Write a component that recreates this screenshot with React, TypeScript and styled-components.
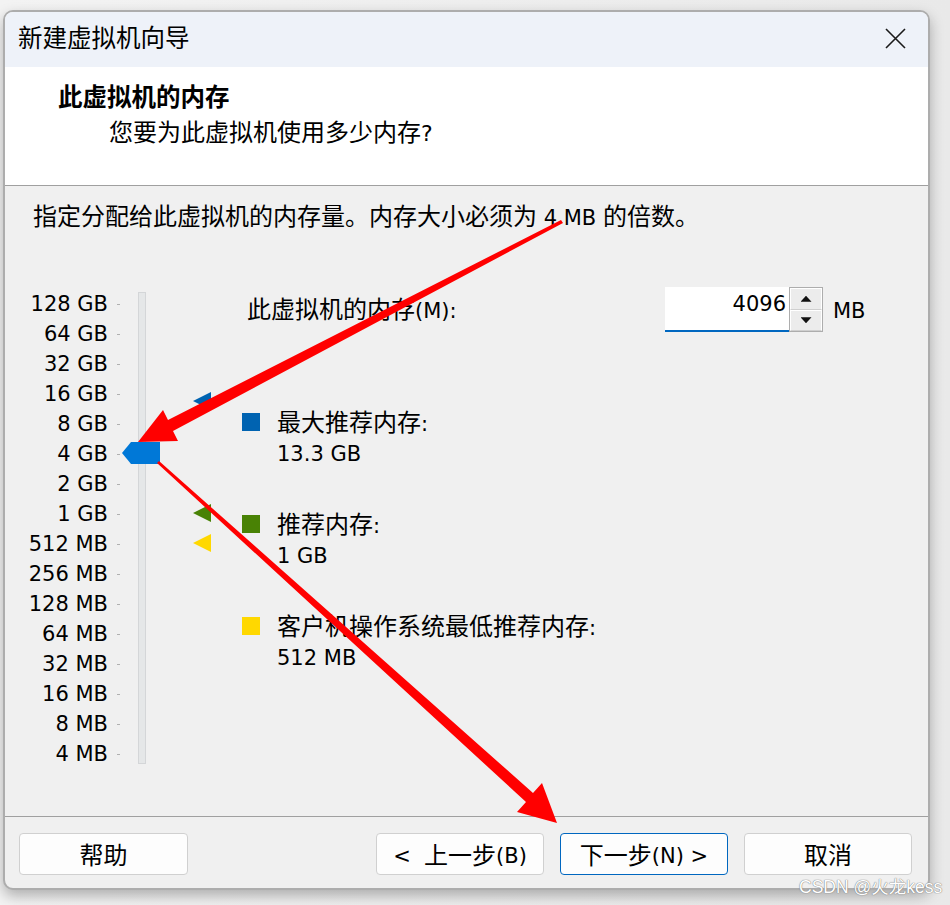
import React from 'react';
import styled, { createGlobalStyle } from 'styled-components';

const GlobalStyle = createGlobalStyle`
  html, body { margin: 0; padding: 0; background: #ededed; }
  body {
    font-family: "DejaVu Sans", "Noto Sans CJK SC", sans-serif;
    color: #000;
    width: 950px;
    height: 905px;
    overflow: hidden;
  }
  * { box-sizing: border-box; }
`;

const Page = styled.div`
  position: relative;
  width: 950px;
  height: 905px;
  padding: 10px 0 0 3px;
  background: linear-gradient(to right, #f3f3f3, #e9e9e9);
`;

const Dialog = styled.div`
  width: 927px;
  height: 880px;
  border: 2px solid #adadad;
  border-radius: 10px;
  background: #f0f0f0;
  overflow: hidden;
  display: flex;
  flex-direction: column;
  box-shadow: 0 6px 14px rgba(0, 0, 0, 0.28);
`;

const TitleBar = styled.div`
  flex: none;
  height: 55px;
  background: #eef2f9;
  display: flex;
  align-items: center;
  justify-content: space-between;
  padding: 0 22px 0 13px;
`;

const TitleText = styled.div`
  font-size: 24.5px;
  line-height: 30px;
  margin-top: -2px;
`;

const CloseButton = styled.div`
  width: 22px;
  height: 22px;
  display: flex;
  align-items: center;
  justify-content: center;
  margin-top: -3px;
`;

const Header = styled.div`
  flex: none;
  height: 119px;
  background: #fff;
  border-bottom: 1px solid #a0a0a0;
  padding: 15px 0 0 53px;
`;

const Heading = styled.div`
  font-size: 24.5px;
  font-weight: bold;
  line-height: 32px;
`;

const SubHeading = styled.div`
  font-size: 22px;
  line-height: 32px;
  margin-top: 3px;
  padding-left: 51px;
`;

const Body = styled.div`
  flex: 1;
  border-bottom: 1px solid #a0a0a0;
  display: flex;
  flex-direction: column;
`;

const Description = styled.div`
  font-size: 21px;
  line-height: 30px;
  padding: 16px 0 0 28px;
`;

const MainRow = styled.div`
  position: relative;
  display: flex;
  margin-top: 56px;
`;

const Scale = styled.div`
  display: flex;
  flex-direction: column;
`;

const ScaleRow = styled.div`
  height: 30px;
  display: flex;
  align-items: center;
`;

const ScaleLabel = styled.div`
  width: 103px;
  text-align: right;
  font-size: 21px;
  line-height: 30px;
`;

const Tick = styled.div`
  width: 3px;
  height: 1px;
  margin-left: 9px;
  background: #b0b0b0;
`;

const Track = styled.div`
  width: 8px;
  height: 472px;
  margin: 3px 0 0 18px;
  background: #e5e7e8;
  border: 1px solid #d4d6d8;
`;

const Thumb = styled.div`
  position: absolute;
  left: 117px;
  width: 38px;
  height: 22px;
  background: #0078d7;
  clip-path: polygon(0 50%, 9px 0, 100% 0, 100% 100%, 9px 100%);
`;

const Marker = styled.div<{ $color: string }>`
  position: absolute;
  left: 188px;
  width: 18px;
  height: 18px;
  background: ${(p) => p.$color};
  clip-path: polygon(0 50%, 100% 0, 100% 100%);
`;

const RightPanel = styled.div`
  display: flex;
  flex-direction: column;
`;

const MemoryRow = styled.div`
  display: flex;
  align-items: center;
  height: 45px;
  margin-top: -2px;
  padding-left: 101px;
`;

const MemoryLabel = styled.div`
  width: 418px;
  font-size: 21px;
  line-height: 30px;
  margin-top: 1px;
`;

const SpinInput = styled.div`
  width: 124px;
  height: 45px;
  background: #fff;
  border-bottom: 2px solid #0067c0;
  text-align: right;
  padding-right: 3px;
  font-size: 21px;
  line-height: 34px;
`;

const SpinButtons = styled.div`
  width: 34px;
  height: 45px;
  border: 1px solid #adadad;
  display: flex;
  flex-direction: column;
`;

const SpinButton = styled.div`
  flex: 1;
  background: #ececec;
  border: 1px solid #fff;
  border-bottom-color: #cfcfcf;
  display: flex;
  align-items: center;
  justify-content: center;
`;

const Caret = styled.div<{ $up?: boolean }>`
  width: 11px;
  height: 6px;
  background: #111;
  clip-path: ${(p) =>
    p.$up ? 'polygon(50% 0, 100% 100%, 0 100%)' : 'polygon(0 0, 100% 0, 50% 100%)'};
`;

const Unit = styled.div`
  margin-left: 10px;
  font-size: 21px;
  line-height: 30px;
  margin-top: 2px;
`;

const Legend = styled.div`
  display: flex;
  flex-direction: column;
  gap: 41px;
  margin-top: 76px;
`;

const LegendItem = styled.div`
  display: flex;
  align-items: flex-start;
  padding-left: 96px;
`;

const Swatch = styled.div<{ $color: string }>`
  width: 18px;
  height: 18px;
  margin-top: 5px;
  flex: none;
  background: ${(p) => p.$color};
`;

const LegendText = styled.div`
  margin-left: 17px;
  font-size: 21px;
  line-height: 30px;
`;

const Footer = styled.div`
  flex: none;
  height: 71px;
  display: flex;
  align-items: flex-start;
  gap: 16px;
  padding: 16px 16px 0 14px;
`;

const Spacer = styled.div`
  flex: 1;
`;

const Button = styled.div<{ $primary?: boolean; $w?: number }>`
  width: ${(p) => p.$w ?? 168}px;
  height: 42px;
  background: #fdfdfd;
  border: 1px solid ${(p) => (p.$primary ? '#0067c0' : '#d0d0d0')};
  border-radius: 4px;
  display: flex;
  align-items: center;
  justify-content: center;
  font-size: 21px;
  line-height: 30px;
  padding-top: 3px;
  white-space: pre;
`;

const Han = styled.span<{ $size?: number }>`
  font-size: ${(p) => p.$size ?? 24}px;
`;

const Watermark = styled.div`
  position: absolute;
  left: 799px;
  top: 875px;
  font-family: "Liberation Sans", "Noto Sans CJK SC", sans-serif;
  font-size: 17.5px;
  line-height: 24px;
  color: #fff;
  text-shadow: 0 0 1px #7a7a7a, 0 0 1px #7a7a7a;
  white-space: nowrap;
`;

const Overlay = styled.svg`
  position: absolute;
  left: 0;
  top: 0;
  pointer-events: none;
`;

const CJK = /([\u2E80-\u9FFF\u3000-\u303F\uFF00-\uFFEF]+)/;

function T({ children, size }: { children: string; size?: number }) {
  return (
    <>
      {children.split(CJK).map((part, i) =>
        i % 2 ? (
          <Han key={i} $size={size}>
            {part}
          </Han>
        ) : (
          <React.Fragment key={i}>{part}</React.Fragment>
        )
      )}
    </>
  );
}

const scale = [
  '128 GB', '64 GB', '32 GB', '16 GB', '8 GB', '4 GB', '2 GB', '1 GB',
  '512 MB', '256 MB', '128 MB', '64 MB', '32 MB', '16 MB', '8 MB', '4 MB',
];

const markers = [
  { color: '#0063b1', top: 103 },
  { color: '#498205', top: 215 },
  { color: '#ffd800', top: 245 },
];

const legend = [
  { color: '#0063b1', title: '最大推荐内存:', value: '13.3 GB' },
  { color: '#498205', title: '推荐内存:', value: '1 GB' },
  { color: '#ffd800', title: '客户机操作系统最低推荐内存:', value: '512 MB' },
];

export default function App() {
  return (
    <Page>
      <GlobalStyle />
      <Dialog>
        <TitleBar>
          <TitleText>新建虚拟机向导</TitleText>
          <CloseButton>
            <svg width="21" height="21" viewBox="0 0 21 21">
              <path d="M1 1 L20 20 M20 1 L1 20" stroke="#1a1a1a" strokeWidth="1.6" fill="none" />
            </svg>
          </CloseButton>
        </TitleBar>
        <Header>
          <Heading>此虚拟机的内存</Heading>
          <SubHeading>
            <T size={24}>您要为此虚拟机使用多少内存</T>?
          </SubHeading>
        </Header>
        <Body>
          <Description>
            <T>指定分配给此虚拟机的内存量。内存大小必须为 4 MB 的倍数。</T>
          </Description>
          <MainRow>
            <Scale>
              {scale.map((s) => (
                <ScaleRow key={s}>
                  <ScaleLabel>{s}</ScaleLabel>
                  <Tick />
                </ScaleRow>
              ))}
            </Scale>
            <Track />
            {markers.map((m) => (
              <Marker key={m.top} $color={m.color} style={{ top: m.top }} />
            ))}
            <Thumb style={{ top: 153 }} />
            <RightPanel>
              <MemoryRow>
                <MemoryLabel>
                  <T>此虚拟机的内存(M):</T>
                </MemoryLabel>
                <SpinInput>4096</SpinInput>
                <SpinButtons>
                  <SpinButton>
                    <Caret $up />
                  </SpinButton>
                  <SpinButton>
                    <Caret />
                  </SpinButton>
                </SpinButtons>
                <Unit>MB</Unit>
              </MemoryRow>
              <Legend>
                {legend.map((l) => (
                  <LegendItem key={l.title}>
                    <Swatch $color={l.color} />
                    <LegendText>
                      <div>
                        <T>{l.title}</T>
                      </div>
                      <div>{l.value}</div>
                    </LegendText>
                  </LegendItem>
                ))}
              </Legend>
            </RightPanel>
          </MainRow>
        </Body>
        <Footer>
          <Button $w={169}>
            <T>帮助</T>
          </Button>
          <Spacer />
          <Button>
            <T>{'<  上一步(B)'}</T>
          </Button>
          <Button $primary>
            <T>{'下一步(N) >'}</T>
          </Button>
          <Button>
            <T>取消</T>
          </Button>
        </Footer>
      </Dialog>
      <Watermark>CSDN @火龙kess</Watermark>
      <Overlay width="950" height="905" viewBox="0 0 950 905">
        <polygon
          fill="#ff0000"
          points="138,442 163,410 168,420 561,220 563,223 173,431 178,441"
        />
        <polygon
          fill="#ff0000"
          points="557,823 517,812 526,802 157,463 159,461 533,793 542,783"
        />
      </Overlay>
    </Page>
  );
}
